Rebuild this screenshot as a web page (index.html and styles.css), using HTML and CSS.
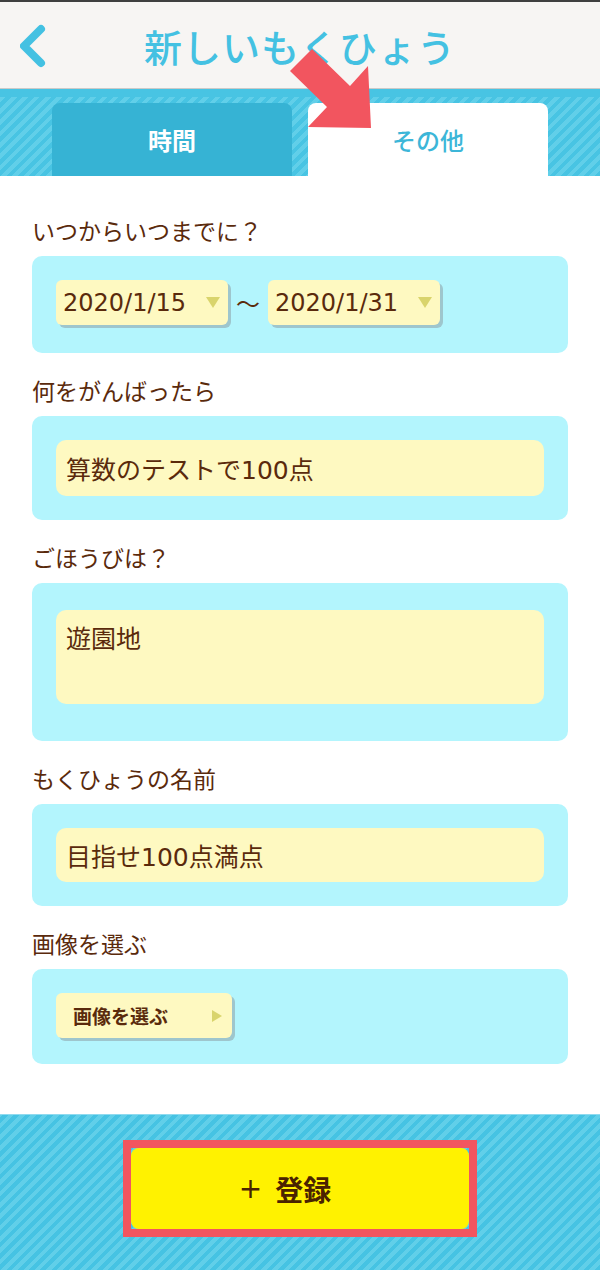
FILE: index.html
```html
<!DOCTYPE html>
<html lang="ja">
<head>
<meta charset="utf-8">
<title>新しいもくひょう</title>
<link rel="stylesheet" href="styles.css">
</head>
<body>
<div class="page">
  <div class="topline"></div>
  <header class="appbar">
    <svg class="back" width="30" height="44" viewBox="0 0 30 44"><polyline points="21,5 4,22 21,39" fill="none" stroke="#44c1e2" stroke-width="8" stroke-linecap="round" stroke-linejoin="round"/></svg>
    <h1 class="title">新しいもくひょう</h1>
  </header>
  <nav class="tabs">
    <div class="tab">時間</div>
    <div class="tab active">その他</div>
  </nav>
  <main class="form">
    <div class="label">いつからいつまでに？</div>
    <div class="box">
      <div class="daterow">
        <div class="select"><span class="num">2020/1/15</span><svg class="tri" width="14" height="11" viewBox="0 0 14 11"><polygon points="0,0 14,0 7,11" fill="#d9d46c"/></svg></div>
        <span class="tilde">～</span>
        <div class="select"><span class="num">2020/1/31</span><svg class="tri" width="14" height="11" viewBox="0 0 14 11"><polygon points="0,0 14,0 7,11" fill="#d9d46c"/></svg></div>
      </div>
    </div>
    <div class="label">何をがんばったら</div>
    <div class="box">
      <div class="input num">算数のテストで100点</div>
    </div>
    <div class="label">ごほうびは？</div>
    <div class="box box-tall">
      <div class="textarea">遊園地</div>
    </div>
    <div class="label">もくひょうの名前</div>
    <div class="box">
      <div class="input input-name num">目指せ100点満点</div>
    </div>
    <div class="label">画像を選ぶ</div>
    <div class="box box-img">
      <div class="imgbtn"><span>画像を選ぶ</span><svg width="10" height="12" viewBox="0 0 10 12"><polygon points="0,0 10,6 0,12" fill="#d9d46c"/></svg></div>
    </div>
  </main>
  <footer class="footer">
    <div class="register"><span class="plus">+</span>登録</div>
  </footer>
  <svg class="arrow" width="600" height="140" viewBox="0 0 600 140"><polygon points="312,49 350,86 368,66 371,128 308,127 327,107 290,71" fill="#f2555f"/></svg>
</div>
</body>
</html>
```

FILE: styles.css
```css
* { box-sizing: border-box; }
html, body { margin: 0; padding: 0; }
body {
  width: 600px;
  height: 1270px;
  overflow: hidden;
  background: #fff;
  font-family: "Noto Sans CJK JP", "Noto Sans", sans-serif;
  color: #5a2a0c;
}
.page {
  position: relative;
  width: 600px;
  height: 1270px;
  display: flex;
  flex-direction: column;
}
.topline { height: 2px; background: #3f3f3f; flex: none; }
.appbar {
  flex: none;
  height: 87px;
  background: #f7f5f3;
  border-bottom: 1px solid #cbcac8;
  display: flex;
  align-items: center;
  position: relative;
}
.back { position: absolute; left: 20px; top: 22px; }
.title {
  margin: 0;
  width: 100%;
  text-align: center;
  font-size: 38px;
  font-weight: 500;
  letter-spacing: 1px;
  color: #44c1e2;
  line-height: 1;
  padding-top: 2px;
}
.tabs {
  flex: none;
  height: 87px;
  padding: 14px 52px 0;
  display: flex;
  gap: 16px;
  background:
    linear-gradient(#48c4e3, #48c4e3) top / 100% 8px no-repeat,
    repeating-linear-gradient(-45deg, #48c4e3 0 4px, #61cfe9 4px 8px);
}
.tab {
  flex: 1;
  border-radius: 8px 8px 0 0;
  background: #36b3d4;
  color: #fff;
  font-size: 24px;
  font-weight: 700;
  display: flex;
  align-items: center;
  justify-content: center;
}
.tab.active { background: #fff; color: #3cb6d8; font-weight: 500; }
.form {
  flex: 1;
  padding: 18px 32px 0;
}
.label {
  margin: 21px 0 10px;
  line-height: 32px;
  font-size: 23px;
  font-weight: 400;
  color: #5a2a0c;
}
.form .label:first-child { margin-top: 20px; }
.box {
  background: #b3f5fd;
  border-radius: 10px;
  padding: 24px 24px 24px;
}
.box-tall { padding-bottom: 37px; padding-top: 27px; }
.box-img { padding-bottom: 26px; }
.num { font-family: "DejaVu Sans", "Noto Sans CJK JP", sans-serif; }
.daterow { display: flex; align-items: center; gap: 8px; padding-bottom: 4px; }
.select {
  width: 172px;
  height: 45px;
  background: #fef9c1;
  border-radius: 6px;
  box-shadow: 3px 3px 0 #9ec6cd;
  display: flex;
  align-items: center;
  justify-content: space-between;
  padding: 0 8px 0 7px;
  font-size: 24px;
  color: #5a2a0c;
}
.tri { flex: none; }
.tilde { font-size: 24px; color: #5a2a0c; }
.input {
  height: 56px;
  background: #fef9c1;
  border-radius: 10px;
  display: flex;
  align-items: center;
  padding: 0 10px;
  font-size: 25px;
}
.input-name { height: 54px; }
.textarea {
  height: 94px;
  background: #fef9c1;
  border-radius: 10px;
  padding: 12px 10px;
  font-size: 25px;
  line-height: 30px;
}
.imgbtn {
  width: 176px;
  height: 45px;
  background: #fef9c1;
  border-radius: 6px;
  box-shadow: 3px 3px 0 #9ec6cd;
  display: flex;
  align-items: center;
  justify-content: space-between;
  padding: 0 10px 0 17px;
  font-size: 19px;
  font-weight: 700;
  color: #5a2a0c;
}
.footer {
  flex: none;
  height: 156px;
  padding-top: 33px;
  border-top: 1px solid #8fdaef;
  background: repeating-linear-gradient(-45deg, #46c3e3 0 4px, #61cfe9 4px 8px);
  display: flex;
  justify-content: center;
  align-items: flex-start;
}
.register {
  position: relative;
  width: 338px;
  height: 81px;
  background: #fff200;
  border-radius: 8px;
  display: flex;
  align-items: center;
  justify-content: center;
  gap: 13px;
  font-size: 28px;
  font-weight: 700;
  color: #4a2300;
  padding-right: 30px;
}
.plus { font-family: "DejaVu Sans", sans-serif; font-weight: 400; font-size: 28px; }
.register::after {
  content: "";
  position: absolute;
  inset: -8px;
  border: 8px solid #f2555f;
}
.arrow { position: absolute; left: 0; top: 0; pointer-events: none; }
```
